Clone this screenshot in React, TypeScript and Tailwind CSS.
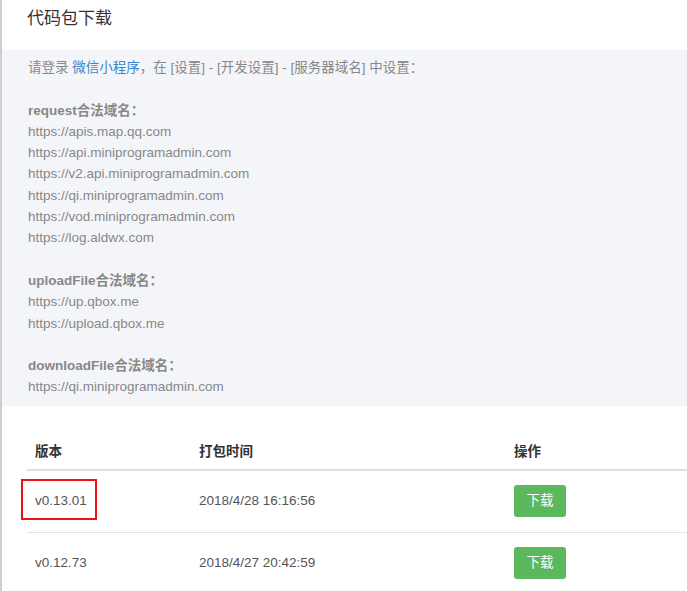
import React from 'react';

const groups = [
  {
    title: 'request合法域名：',
    urls: [
      'https://apis.map.qq.com',
      'https://api.miniprogramadmin.com',
      'https://v2.api.miniprogramadmin.com',
      'https://qi.miniprogramadmin.com',
      'https://vod.miniprogramadmin.com',
      'https://log.aldwx.com',
    ],
  },
  { title: 'uploadFile合法域名：', urls: ['https://up.qbox.me', 'https://upload.qbox.me'] },
  { title: 'downloadFile合法域名：', urls: ['https://qi.miniprogramadmin.com'] },
];

const versions = [
  { v: 'v0.13.01', time: '2018/4/28 16:16:56', marked: true },
  { v: 'v0.12.73', time: '2018/4/27 20:42:59', marked: false },
];

export default function App() {
  return (
    <div
      className="min-h-[591px] bg-white border-l-2 border-[#cfcfcf] text-[13.5px] text-[#333]"
      style={{ fontFamily: '"Liberation Sans", Arial, "Noto Sans CJK SC", sans-serif' }}
    >
      {/* Title */}
      <div className="h-[50px] pl-[25px] pt-[7px]">
        <h2 className="text-[17px] leading-[24px] text-[#333]">代码包下载</h2>
      </div>

      {/* Domain notice */}
      <div className="bg-[#f4f5f9] pl-[26px] pt-[7px] pb-[8px] leading-[21.3px] text-[#888]">
        <div>
          请登录 <span className="text-[#3a87c8]">微信小程序</span>，在 [设置] - [开发设置] - [服务器域名] 中设置：
        </div>
        {groups.map(g => (
          <div key={g.title} className="mt-[21.3px]">
            <div className="font-bold">{g.title}</div>
            {g.urls.map(u => (
              <div key={u}>{u}</div>
            ))}
          </div>
        ))}
      </div>

      {/* Versions table */}
      <div className="pl-[25px] pt-[28px]">
        <table className="w-full border-collapse text-left">
          <thead>
            <tr className="border-b-2 border-[#dedede]">
              <th className="w-[164px] px-2 pt-2 pb-[7px] leading-5 font-bold text-[#333]">版本</th>
              <th className="w-[315px] px-2 pt-2 pb-[7px] leading-5 font-bold text-[#333]">打包时间</th>
              <th className="px-2 pt-2 pb-[7px] leading-5 font-bold text-[#333]">操作</th>
            </tr>
          </thead>
          <tbody>
            {versions.map(r => (
              <tr key={r.v} className="border-b border-[#e3e3e3] text-[#555]">
                <td className="relative px-2 py-[14.5px] leading-8">
                  {r.v}
                  {r.marked && (
                    <span className="absolute left-[-6px] top-[8px] w-[76px] h-[41px] border-2 border-[#e8121a]" />
                  )}
                </td>
                <td className="px-2 py-[14.5px] leading-8">{r.time}</td>
                <td className="px-2 py-[14.5px]">
                  <button className="h-8 w-[52px] rounded-[3px] bg-[#5cb85c] text-white text-[13.5px] leading-8">
                    下载
                  </button>
                </td>
              </tr>
            ))}
          </tbody>
        </table>
      </div>
    </div>
  );
}
